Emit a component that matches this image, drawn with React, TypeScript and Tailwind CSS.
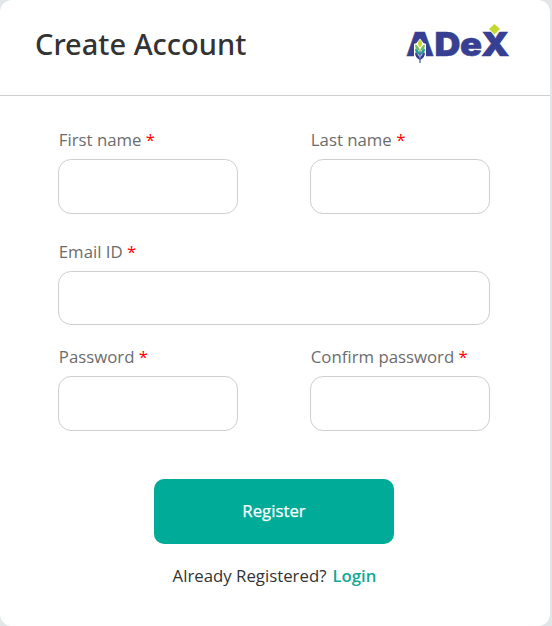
type FieldProps = { label: string; type?: string; className?: string };

function Field({ label, type = "text", className = "h-[55px]" }: FieldProps) {
  return (
    <label className="flex min-w-0 flex-1 flex-col">
      <span className="h-[31px] pl-[0.8px] text-[16.8px] leading-6 text-[#6c6c6c]">
        {label} <span className="font-medium text-[#ff0000]">*</span>
      </span>
      <input
        type={type}
        className={`w-full rounded-[13px] border border-[#cfcfcf] bg-white px-4 outline-none ${className}`}
      />
    </label>
  );
}

function Logo() {
  return (
    <svg width="104" height="42" viewBox="0 0 104 42" role="img" aria-label="ADeX">
      <g fill="#363f91" stroke="#363f91" strokeWidth="0.5" fontFamily="Inter, sans-serif" fontWeight="900" fontSize="33">
        <text x="0" y="34" textLength="28" lengthAdjust="spacingAndGlyphs">A</text>
        <text x="28.5" y="34" textLength="26" lengthAdjust="spacingAndGlyphs">D</text>
        <text x="54" y="34" textLength="22" lengthAdjust="spacingAndGlyphs">e</text>
        <text x="75" y="34" textLength="28.5" lengthAdjust="spacingAndGlyphs">X</text>
      </g>
      <path d="M10 12H18L22 31H6Z" fill="#363f91" />
      <path d="M14 16.5 L17.5 21 L20 22 V35 H8 V22 L10.5 21Z" fill="white" />
      <path d="M14 17.5 Q18 21.5 14 25.5 Q10 21.5 14 17.5Z" fill="#c5d832" />
      <path d="M9 22.5 Q13 23.5 14 29 Q9 28 9 22.5ZM19 22.5 Q15 23.5 14 29 Q19 28 19 22.5Z" fill="#79bd63" />
      <path d="M9 26.5 Q13 27.5 14 33 Q9 32 9 26.5ZM19 26.5 Q15 27.5 14 33 Q19 32 19 26.5Z" fill="#249c91" />
      <path d="M9 30.5 Q13 31.5 14 38 Q9 36 9 30.5ZM19 30.5 Q15 31.5 14 38 Q19 36 19 30.5Z" fill="#363f91" />
      <path d="M14 29V41" stroke="#363f91" strokeWidth="1.1" />
      <path d="M88.5 1 L95 7 L88.5 13.5 L82 7Z" fill="white" />
      <path d="M88.5 2 L94 7 L88.5 12.5 L83 7Z" fill="#c5d832" />
    </svg>
  );
}

export default function App() {
  return (
    <main className="h-[626px] w-[552px] bg-[#e1e6e8] pr-0.5 font-['Open_Sans',sans-serif]">
      <section className="h-full rounded-[12px] bg-white">
        <header className="flex h-24 items-start justify-between border-b border-[#cfcfcf] pl-[35px] pr-10">
          <h1 className="pt-6 font-['Noto_Sans',sans-serif] text-[29px] font-medium leading-10 text-[#333]">Create Account</h1>
          <div className="pt-[22px]"><Logo /></div>
        </header>
        <form className="pl-[58px] pt-8 pr-[60px]">
          <div className="flex gap-[72px]">
            <Field label="First name" />
            <Field label="Last name" />
          </div>
          <div className="mt-[26px] flex">
            <Field label="Email ID" type="email" className="h-[54px]" />
          </div>
          <div className="mt-5 flex gap-[72px]">
            <Field label="Password" type="password" />
            <Field label="Confirm password" type="password" />
          </div>
          <div className="mt-12 flex flex-col items-center">
            <button type="button" className="h-[65px] w-60 rounded-[10px] bg-[#00ab98] pb-0.5 text-[16.8px] font-medium text-white [-webkit-text-stroke:0.25px_white]">
              Register
            </button>
            <p className="mt-5 pl-px text-[16.8px] leading-6 text-[#333]">
              Already Registered?
              <a href="#" className="ml-1.5 font-semibold text-[#12a896]">Login</a>
            </p>
          </div>
        </form>
      </section>
    </main>
  );
}
